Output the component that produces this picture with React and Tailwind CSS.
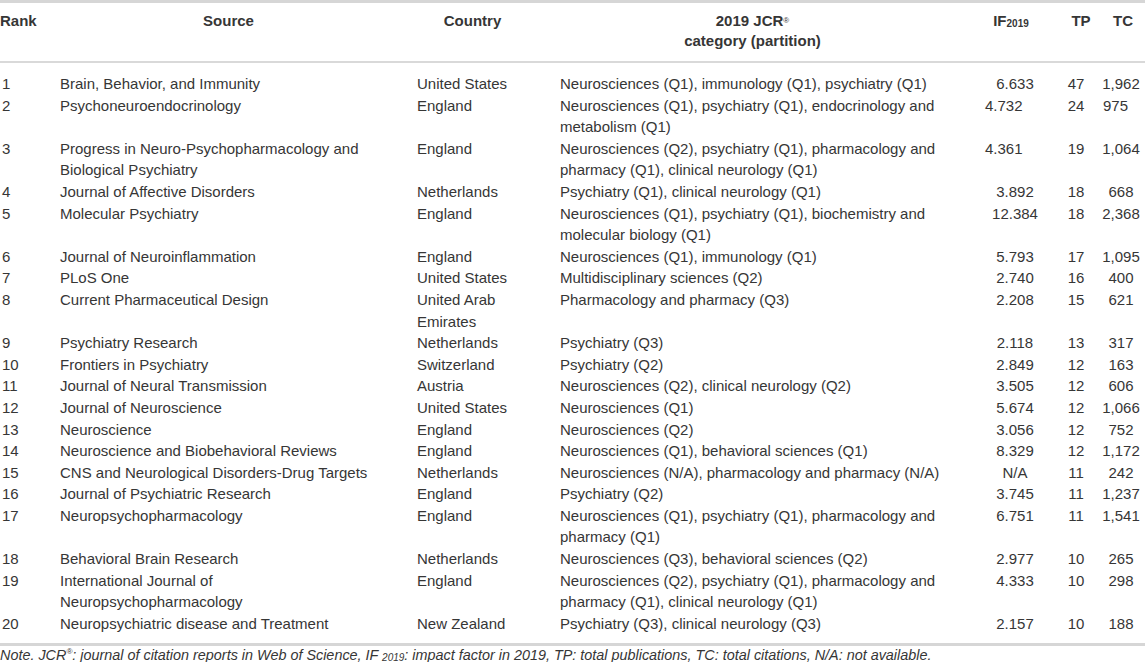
import React from 'react';

const rows = [
  ['1', ['Brain, Behavior, and Immunity'], ['United States'], ['Neurosciences (Q1), immunology (Q1), psychiatry (Q1)'], '6.633', '47', '1,962'],
  ['2', ['Psychoneuroendocrinology'], ['England'], ['Neurosciences (Q1), psychiatry (Q1), endocrinology and', 'metabolism (Q1)'], '4.732', '24', '975'],
  ['3', ['Progress in Neuro-Psychopharmacology and', 'Biological Psychiatry'], ['England'], ['Neurosciences (Q2), psychiatry (Q1), pharmacology and', 'pharmacy (Q1), clinical neurology (Q1)'], '4.361', '19', '1,064'],
  ['4', ['Journal of Affective Disorders'], ['Netherlands'], ['Psychiatry (Q1), clinical neurology (Q1)'], '3.892', '18', '668'],
  ['5', ['Molecular Psychiatry'], ['England'], ['Neurosciences (Q1), psychiatry (Q1), biochemistry and', 'molecular biology (Q1)'], '12.384', '18', '2,368'],
  ['6', ['Journal of Neuroinflammation'], ['England'], ['Neurosciences (Q1), immunology (Q1)'], '5.793', '17', '1,095'],
  ['7', ['PLoS One'], ['United States'], ['Multidisciplinary sciences (Q2)'], '2.740', '16', '400'],
  ['8', ['Current Pharmaceutical Design'], ['United Arab', 'Emirates'], ['Pharmacology and pharmacy (Q3)'], '2.208', '15', '621'],
  ['9', ['Psychiatry Research'], ['Netherlands'], ['Psychiatry (Q3)'], '2.118', '13', '317'],
  ['10', ['Frontiers in Psychiatry'], ['Switzerland'], ['Psychiatry (Q2)'], '2.849', '12', '163'],
  ['11', ['Journal of Neural Transmission'], ['Austria'], ['Neurosciences (Q2), clinical neurology (Q2)'], '3.505', '12', '606'],
  ['12', ['Journal of Neuroscience'], ['United States'], ['Neurosciences (Q1)'], '5.674', '12', '1,066'],
  ['13', ['Neuroscience'], ['England'], ['Neurosciences (Q2)'], '3.056', '12', '752'],
  ['14', ['Neuroscience and Biobehavioral Reviews'], ['England'], ['Neurosciences (Q1), behavioral sciences (Q1)'], '8.329', '12', '1,172'],
  ['15', ['CNS and Neurological Disorders-Drug Targets'], ['Netherlands'], ['Neurosciences (N/A), pharmacology and pharmacy (N/A)'], 'N/A', '11', '242'],
  ['16', ['Journal of Psychiatric Research'], ['England'], ['Psychiatry (Q2)'], '3.745', '11', '1,237'],
  ['17', ['Neuropsychopharmacology'], ['England'], ['Neurosciences (Q1), psychiatry (Q1), pharmacology and', 'pharmacy (Q1)'], '6.751', '11', '1,541'],
  ['18', ['Behavioral Brain Research'], ['Netherlands'], ['Neurosciences (Q3), behavioral sciences (Q2)'], '2.977', '10', '265'],
  ['19', ['International Journal of', 'Neuropsychopharmacology'], ['England'], ['Neurosciences (Q2), psychiatry (Q1), pharmacology and', 'pharmacy (Q1), clinical neurology (Q1)'], '4.333', '10', '298'],
  ['20', ['Neuropsychiatric disease and Treatment'], ['New Zealand'], ['Psychiatry (Q3), clinical neurology (Q3)'], '2.157', '10', '188'],
];

function Lines({ lines }) {
  return lines.map((l, i) => (
    <div key={i} className="whitespace-nowrap">{l}</div>
  ));
}

export default function App() {
  return (
    <div
      className="w-[1145px] h-[662px] bg-white text-[#363636] overflow-hidden"
      style={{ fontFamily: '"Liberation Sans", Arial, sans-serif' }}
    >
      <table className="w-[1145px] table-fixed border-collapse text-[15px]">
        <colgroup>
          <col className="w-[60px]" />
          <col className="w-[357px]" />
          <col className="w-[143px]" />
          <col className="w-[415px]" />
          <col className="w-[80px]" />
          <col className="w-[42px]" />
          <col className="w-[48px]" />
        </colgroup>
        <thead>
          <tr className="border-t-[3px] border-b-2 border-t-[#d6d6d6] border-b-[#d9d9d9] font-bold leading-[20px] align-top">
            <th className="text-left pt-[8px] pb-[10px]">Rank</th>
            <th className="text-center pt-[8px] pb-[10px] pr-[20px]">Source</th>
            <th className="text-center pt-[8px] pb-[10px] pr-[32px]">Country</th>
            <th className="text-center pt-[8px] pb-[10px] pr-[30px]">
              <div>
                2019 JCR<sup className="text-[8px] font-normal relative -top-[3px]">®</sup>
              </div>
              <div>category (partition)</div>
            </th>
            <th className="text-center pt-[8px] pb-[10px] pr-[8px]">
              IF<sub className="text-[10px] relative top-[1px]">2019</sub>
            </th>
            <th className="text-center pt-[8px] pb-[10px] pl-[10px]">TP</th>
            <th className="text-center pt-[8px] pb-[10px] pl-[4px]">TC</th>
          </tr>
        </thead>
        <tbody className="leading-[21.6px]">
          {rows.map((r, i) => {
            const first = i === 0 ? 'pt-[10px]' : '';
            const last = i === rows.length - 1 ? 'pb-[9px]' : '';
            const ifAlign = i === 1 || i === 2 ? 'text-left pl-[10px]' : 'text-center';
            const tcAlign = i === 1 ? 'text-left pl-[6px]' : 'text-center';
            return (
              <tr
                key={r[0]}
                className={`align-top ${i === rows.length - 1 ? 'border-b-[3px] border-[#d6d6d6]' : ''}`}
              >
                <td className={`pl-[2px] ${first} ${last}`}>{r[0]}</td>
                <td className={`${first} ${last}`}><Lines lines={r[1]} /></td>
                <td className={`${first} ${last}`}><Lines lines={r[2]} /></td>
                <td className={`${first} ${last}`}><Lines lines={r[3]} /></td>
                <td className={`${ifAlign} ${first} ${last}`}>{r[4]}</td>
                <td className={`text-center ${first} ${last}`}>{r[5]}</td>
                <td className={`${tcAlign} ${first} ${last}`}>{r[6]}</td>
              </tr>
            );
          })}
        </tbody>
      </table>
      <p className="italic text-[14.4px] leading-[15px] pt-[2px] whitespace-nowrap">
        Note. JCR
        <span className="text-[8px] align-baseline relative -top-[6px]">®</span>
        : journal of citation reports in Web of Science, IF{' '}
        <span className="text-[10px] align-baseline relative top-[1px]">2019</span>
        : impact factor in 2019, TP: total publications, TC: total citations, N/A: not available.
      </p>
    </div>
  );
}
